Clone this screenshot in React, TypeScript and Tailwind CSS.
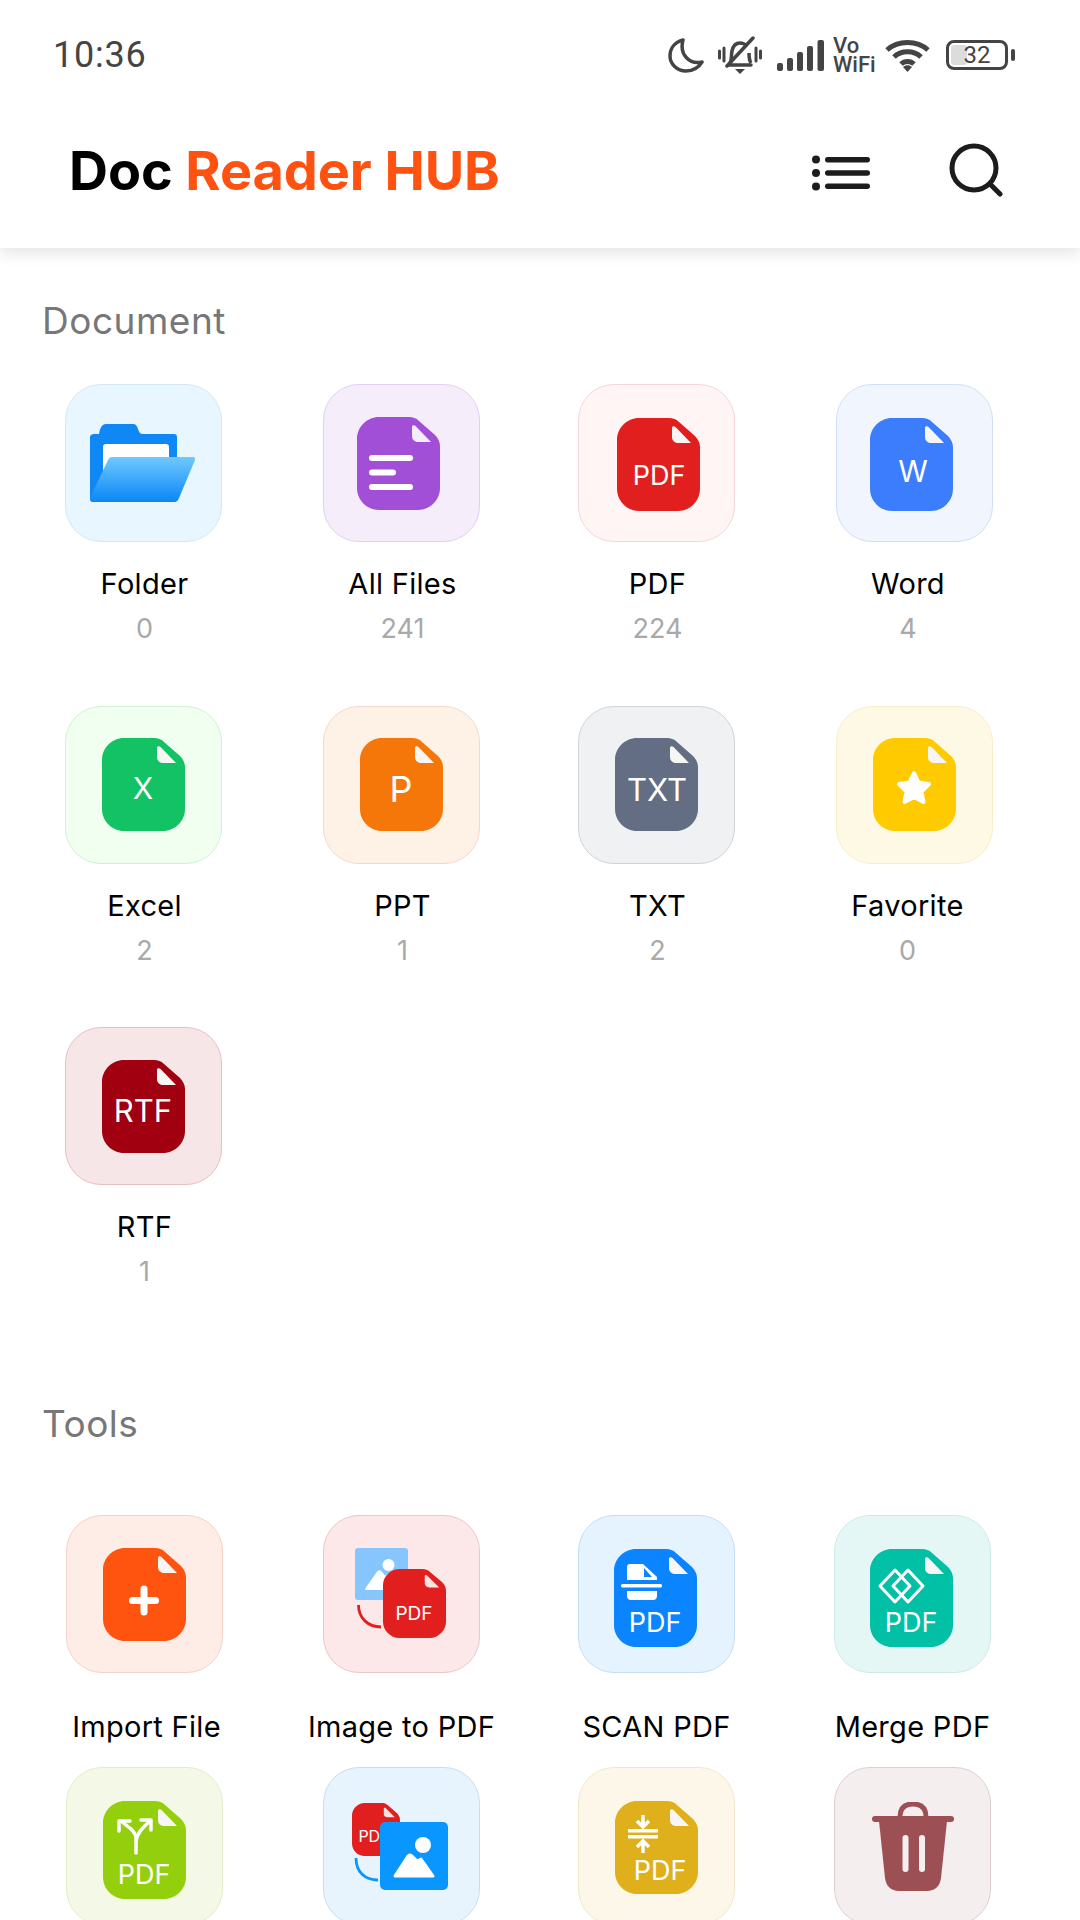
import type { ReactNode } from "react";

const UI_FONT = "font-['Inter','Liberation_Sans',sans-serif]";

const docPath = (h: number) =>
  `M22 0H52C56 0 59 1 62 4L78 18C81 21 83 25 83 29V${h - 22}C83 ${h - 10} 73 ${h} 61 ${h}H22C10 ${h} 0 ${h - 10} 0 ${h - 22}V22C0 10 10 0 22 0Z`;

const FOLD = "M55 10C55 8 57 7.500 58.500 9L74 25H61C57.500 25 55 22.500 55 19Z";

function Doc({ color, h = 93, fold = "#f8f5f5", children }: { color: string; h?: number; fold?: string; children?: ReactNode }) {
  return (
    <svg width="83" height={h} viewBox={`0 0 83 ${h}`} className="shrink-0">
      <path d={docPath(h)} fill={color} />
      <path d={FOLD} fill={fold} />
      {children}
    </svg>
  );
}

function Label({ x, y, size, children }: { x: number; y: number; size: number; children: string }) {
  return (
    <text x={x} y={y} fontSize={size} fill="#fff" textAnchor="middle" fontFamily="Inter, sans-serif">
      {children}
    </text>
  );
}

function FolderIcon() {
  return (
    <svg width="105" height="78" viewBox="0 0 105 78" className="mr-[3px]">
      <defs>
        <linearGradient id="folderFront" x1="0" y1="0" x2="0" y2="1">
          <stop offset="0" stopColor="#70c9ff" />
          <stop offset="1" stopColor="#0a86f6" />
        </linearGradient>
      </defs>
      <path d="M0 13C0 11 2 10 4 10H9C10 4 12 0 16 0H43C46 0 47 2 48 5C49 8 50 10 53 10H84C86 10 87 11 87 13V74C87 76 86 78 84 78H3C1 78 0 76 0 74Z" fill="#0f88f6" />
      <rect x="13" y="20" width="66" height="32" rx="3" fill="#fff" />
      <path d="M18 36C19 34 20 33 22 33H103C105 33 105.500 34.500 105 36L89 74C88 77 86 78 84 78H3C1 78 0 77 0 74Z" fill="url(#folderFront)" />
    </svg>
  );
}

function ImageToPdfIcon() {
  return (
    <svg width="91" height="90" viewBox="0 0 91 90" className="mb-[3px] mr-[3px]">
      <rect width="53" height="52" rx="3" fill="#86c5fd" />
      <circle cx="33.500" cy="17" r="6" fill="#fff" />
      <path d="M11 41L23 24C24 23 25 23 26 24L30 29L34 26L46 41Z" fill="#fff" stroke="#fff" strokeLinejoin="round" strokeWidth="2" />
      <path d="M3.500 57C3.500 70 13 79 26 79" fill="none" stroke="#e11f1f" strokeWidth="2.800" />
      <g transform="translate(28 21) scale(0.759 0.742)">
        <path d={docPath(93)} fill="#e11f1f" />
        <path d={FOLD} fill="#fbe3e3" />
      </g>
      <Label x={59} y={72} size={19}>PDF</Label>
    </svg>
  );
}

function PdfToImageIcon() {
  return (
    <svg width="96" height="87" viewBox="0 0 96 87" className="mr-[3px]">
      <g transform="scale(0.578 0.57)">
        <path d={docPath(93)} fill="#e11f1f" />
        <path d={FOLD} fill="#fbe3e3" />
      </g>
      <Label x={22} y={39} size={16}>PDF</Label>
      <path d="M4 55C4 69 13 77 26 77" fill="none" stroke="#0a96ff" strokeWidth="2.800" />
      <rect x="28" y="19" width="68" height="68" rx="5" fill="#0a96ff" />
      <circle cx="71" cy="42" r="8" fill="#fff" />
      <path d="M43 73L56 53C57 51.500 59 51.500 60 53L65 58L69 56L81 73Z" fill="#fff" stroke="#fff" strokeLinejoin="round" strokeWidth="3" />
    </svg>
  );
}

function TrashIcon() {
  return (
    <svg width="82" height="89" viewBox="0 0 82 89">
      <path d="M28 15C28 6 33 2 41 2C49 2 54 6 54 15" fill="none" stroke="#9c5054" strokeWidth="5" />
      <rect y="14" width="82" height="6" rx="3" fill="#9c5054" />
      <path d="M7 19H75L69 76C68 84 63 89 55 89H27C19 89 14 84 13 76Z" fill="#9c5054" />
      <rect x="30.500" y="33" width="6" height="37" rx="3" fill="#f4eeef" />
      <rect x="47" y="33" width="6" height="37" rx="3" fill="#f4eeef" />
    </svg>
  );
}

const DOCUMENTS = [
  { title: "Folder", count: "0", tile: "bg-[#e8f6ff] border-[#d3e8f6]", icon: <FolderIcon /> },
  {
    title: "All Files",
    count: "241",
    tile: "bg-[#f6edfb] border-[#e3cfee]",
    icon: (
      <div className="mr-[6px]">
        <Doc color="#a04fd6" fold="#f6edfb">
          <rect x="12" y="38" width="44" height="6" rx="3" fill="#fff" />
          <rect x="12" y="52.500" width="27" height="6" rx="3" fill="#fff" />
          <rect x="12" y="67" width="44" height="6" rx="3" fill="#fff" />
        </Doc>
      </div>
    ),
  },
  {
    title: "PDF",
    count: "224",
    tile: "bg-[#fff5f4] border-[#f6d6d6]",
    icon: (
      <div className="ml-[4px] mt-[2px]">
        <Doc color="#e11f1f"><Label x={42} y={67} size={27}>PDF</Label></Doc>
      </div>
    ),
  },
  {
    title: "Word",
    count: "4",
    tile: "bg-[#f1f6fe] border-[#d0dff5]",
    shift: "pr-[13px]",
    icon: (
      <div className="mr-[6px] mt-[2px]">
        <Doc color="#3b7dfc"><Label x={43} y={64} size={30}>W</Label></Doc>
      </div>
    ),
  },
  {
    title: "Excel",
    count: "2",
    tile: "bg-[#f1fff1] border-[#cdf3d2]",
    icon: <Doc color="#12c264"><Label x={41} y={61} size={30}>X</Label></Doc>,
  },
  {
    title: "PPT",
    count: "1",
    tile: "bg-[#fef1e6] border-[#f3dac8]",
    icon: <Doc color="#f57609"><Label x={41} y={64} size={36}>P</Label></Doc>,
  },
  {
    title: "TXT",
    count: "2",
    tile: "bg-[#eff1f3] border-[#d0d3d8]",
    icon: <Doc color="#636e85"><Label x={42} y={63} size={31}>TXT</Label></Doc>,
  },
  {
    title: "Favorite",
    count: "0",
    tile: "bg-[#fef9e5] border-[#f8eeca]",
    shift: "pr-[14px]",
    icon: (
      <Doc color="#ffcb00">
        <path d="M41 35L45.500 44.500L56 46L48.500 53.500L50.500 64L41 59L31.500 64L33.500 53.500L26 46L36.500 44.500Z" fill="#fff" stroke="#fff" strokeWidth="4" strokeLinejoin="round" />
      </Doc>
    ),
  },
  {
    title: "RTF",
    count: "1",
    tile: "bg-[#f6e6e7] border-[#e7bfc2]",
    icon: <Doc color="#a00010"><Label x={41} y={62} size={31}>RTF</Label></Doc>,
  },
];

// the second row runs past the bottom of the screen, so it has no captions
const TOOLS: { title?: string; tile: string; shift?: string; icon: ReactNode }[] = [
  {
    title: "Import File",
    tile: "bg-[#feede7] border-[#f4d2c7]",
    shift: "pl-[4px]",
    icon: (
      <Doc color="#ff5410">
        <path d="M41 41V64M29.500 52.500H52.500" stroke="#fff" strokeWidth="7" strokeLinecap="round" />
      </Doc>
    ),
  },
  { title: "Image to PDF", tile: "bg-[#fce8e8] border-[#eec6c6]", icon: <ImageToPdfIcon /> },
  {
    title: "SCAN PDF",
    tile: "bg-[#e5f3fe] border-[#c6def3]",
    icon: (
      <div className="mr-[3px] mt-[7px]">
        <Doc color="#0a84ff" h={98}>
          <path d="M16 15H29L43 28V31H13V18C13 16 14 15 16 15Z" fill="#fff" />
          <path d="M30 19L38 28H30Z" fill="#0a84ff" />
          <rect x="7" y="35" width="41" height="3.500" rx="1.500" fill="#fff" />
          <path d="M13 42H43V47C43 49.500 41.500 51 39 51H17C14.500 51 13 49.500 13 47Z" fill="#fff" />
          <Label x={41} y={83} size={27}>PDF</Label>
        </Doc>
      </div>
    ),
  },
  {
    title: "Merge PDF",
    tile: "bg-[#e5f7f5] border-[#cdeae5]",
    icon: (
      <div className="mr-[3px] mt-[7px]">
        <Doc color="#02c0a6" h={98}>
          <g fill="none" stroke="#fff" strokeWidth="3" strokeLinejoin="round">
            <path d="M25 21L40 37L25 53L10 37Z" />
            <path d="M38 21L53 37L38 53L23 37Z" />
          </g>
          <Label x={41} y={83} size={27}>PDF</Label>
        </Doc>
      </div>
    ),
  },
  {
    tile: "bg-[#f4f9e7] border-[#e2ecc6]",
    icon: (
      <div className="mt-[7px]">
        <Doc color="#94cf0d" h={98}>
          <g fill="none" stroke="#fff" strokeWidth="3.500" strokeLinecap="round" strokeLinejoin="round">
            <path d="M33 52V37C33 33 31 31 28 28L18 20" />
            <path d="M33 40C34 33 38 28 47 20" />
            <path d="M16 30V20H27" />
            <path d="M38 19H48V29" />
          </g>
          <Label x={41} y={83} size={27}>PDF</Label>
        </Doc>
      </div>
    ),
  },
  { tile: "bg-[#e7f3fd] border-[#c6dff0]", icon: <PdfToImageIcon /> },
  {
    tile: "bg-[#fcf7e9] border-[#f2e7c9]",
    icon: (
      <div className="mt-[3px]">
        <Doc color="#e0af1c">
          <path d="M28 14V24M22 20L28 26L34 20" fill="none" stroke="#fff" strokeWidth="3.500" />
          <rect x="13" y="28" width="30" height="3.500" fill="#fff" />
          <rect x="13" y="34" width="30" height="3.500" fill="#fff" />
          <path d="M28 52V42M22 46L28 40L34 46" fill="none" stroke="#fff" strokeWidth="3.500" />
          <Label x={45} y={79} size={27}>PDF</Label>
        </Doc>
      </div>
    ),
  },
  { tile: "bg-[#f4eeef] border-[#e0cdd1]", icon: <TrashIcon /> },
];

function StatusIcons() {
  return (
    <div className="flex items-center text-[#444]">
      {/* moon */}
      <svg width="36" height="36" viewBox="0 0 36 36" fill="none" stroke="#444" strokeWidth="3.500" strokeLinejoin="round">
        <path d="M15 3C7 5 2 11 2 19C2 27 9 34 18 34C25 34 31 30 34 25C22 28 11 18 15 3Z" />
      </svg>
      {/* muted bell */}
      <svg width="44" height="38" viewBox="0 0 44 38" fill="none" stroke="#444" className="ml-[14px]">
        <path d="M1.500 15V22M6 12V25M38 12V25M42.500 15V22" strokeWidth="3" strokeLinecap="round" />
        <path d="M12 27C14 24 13 19 14 15C15 10 18 7 22 7C25 7 27 8 29 10M31 17C31 21 31 24 33 27" strokeWidth="3.500" strokeLinejoin="round" />
        <path d="M11 29H33" strokeWidth="3.500" strokeLinecap="round" />
        <path d="M9 30L35 2" strokeWidth="3.500" strokeLinecap="round" />
        <path d="M17 33H27L22 38Z" fill="#444" stroke="none" />
      </svg>
      {/* signal bars */}
      <svg width="47" height="31" viewBox="0 0 47 31" fill="#444" className="ml-[15px]">
        <rect x="0" y="23" width="6" height="8" rx="2" />
        <rect x="10" y="18" width="6" height="13" rx="2" />
        <rect x="20" y="12" width="6" height="19" rx="2" />
        <rect x="30" y="6" width="6" height="25" rx="2" />
        <rect x="40.500" y="0" width="6.500" height="31" rx="2" />
      </svg>
      <div className="ml-[9px] w-[42px] font-['Roboto',sans-serif] text-[22px] font-medium leading-[19px]">
        Vo
        <br />
        WiFi
      </div>
      {/* wifi */}
      <svg width="45" height="33" viewBox="0 0 45 33" fill="none" stroke="#444" strokeWidth="5" className="ml-[10px]">
        <path d="M2 11C13 1 32 1 43 11" />
        <path d="M9 18C16 11 29 11 36 18" />
        <path d="M16 25C19.500 21.500 25.500 21.500 29 25" />
        <path d="M22.500 33L18 28C21 25.500 24 25.500 27 28Z" fill="#444" stroke="none" />
      </svg>
      {/* battery */}
      <div className="ml-[16px] flex items-center">
        <div className="relative flex h-[30px] w-[62px] items-center justify-center rounded-[8px] border-[3px] border-[#444]">
          <div className="absolute bottom-[2px] left-[2px] top-[2px] w-[16px] rounded-[3px] bg-[#dcdcdc]" />
          <span className="relative font-['Roboto',sans-serif] text-[24px] leading-none">32</span>
        </div>
        <div className="ml-[3px] h-[12px] w-[4px] rounded-full bg-[#444]" />
      </div>
    </div>
  );
}

function Tile({ className, children }: { className: string; children: ReactNode }) {
  return (
    <div className={`flex h-[158px] w-[157px] shrink-0 items-center justify-center rounded-[36px] border ${className}`}>
      {children}
    </div>
  );
}

export default function App() {
  return (
    <div className={`h-[1920px] w-[1080px] overflow-hidden bg-white ${UI_FONT}`}>
      {/* Status bar */}
      <div className="relative z-10 flex h-[108px] items-center justify-between bg-white pl-[53px] pr-[65px] pt-[2px]">
        <span className="font-['Roboto',sans-serif] text-[36px] tracking-[0.8px] text-[#444]">10:36</span>
        <StatusIcons />
      </div>

      {/* App bar */}
      <header className="relative flex h-[140px] items-center justify-between pb-[10px] pl-[69px] pr-[77px] shadow-[0_6px_14px_rgba(0,0,0,0.1)]">
        <h1 className="mb-[5px] text-[54px] font-bold tracking-[-0.1px] text-[#ff5210]">
          <span className="text-black">Doc</span> Reader HUB
        </h1>
        <div className="flex items-center gap-[79px]">
          <svg width="58" height="36" viewBox="0 0 58 36" fill="#1c1c1c">
            <circle cx="4" cy="4.500" r="4" />
            <circle cx="4" cy="18" r="4" />
            <circle cx="4" cy="31.500" r="4" />
            <rect x="13" y="2" width="45" height="5.500" rx="2.700" />
            <rect x="13" y="15.200" width="45" height="5.500" rx="2.700" />
            <rect x="13" y="28.500" width="45" height="5.500" rx="2.700" />
          </svg>
          <svg width="54" height="54" viewBox="0 0 54 54" fill="none" stroke="#1c1c1c" strokeWidth="5" strokeLinecap="round" className="mb-[6px]">
            <circle cx="25" cy="25" r="22" />
            <path d="M41 41L51 51" />
          </svg>
        </div>
      </header>

      {/* Document section */}
      <section>
        <h2 className="pl-[42px] pt-[49px] text-[37px] font-normal leading-[48px] tracking-[0.5px] text-[#777]">Document</h2>
        <div className="mt-[39px] grid grid-cols-[258px_255px_258px_158px] gap-y-[58.5px] pl-[65px]">
          {DOCUMENTS.map((item) => (
            <div key={item.title} className="flex w-[157px] flex-col items-center">
              <Tile className={item.tile}>{item.icon}</Tile>
              <div className={`flex flex-col items-center ${item.shift ?? "pl-[2px]"}`}>
                <span className="mt-[24px] h-[36px] whitespace-nowrap text-[29px] leading-[36px] tracking-[0.3px] text-black">{item.title}</span>
                <span className="mt-[9px] h-[36px] text-[27px] leading-[36px] text-[#a9a9a9]">{item.count}</span>
              </div>
            </div>
          ))}
        </div>
      </section>

      {/* Tools section */}
      <section>
        <h2 className="pl-[42px] pt-[110px] text-[37px] font-normal leading-[48px] tracking-[0.5px] text-[#777]">Tools</h2>
        <div className="mt-[67px] grid grid-cols-[257px_255px_256px_158px] gap-y-[22px] pl-[66px]">
          {TOOLS.map((item, i) => (
            <div key={i} className="flex w-[157px] flex-col items-center">
              <Tile className={item.tile}>{item.icon}</Tile>
              {item.title && (
                <div className={item.shift ?? ""}>
                  <span className="mt-[36px] block h-[36px] whitespace-nowrap text-[29px] leading-[36px] tracking-[0.3px] text-black">{item.title}</span>
                </div>
              )}
            </div>
          ))}
        </div>
      </section>
    </div>
  );
}
